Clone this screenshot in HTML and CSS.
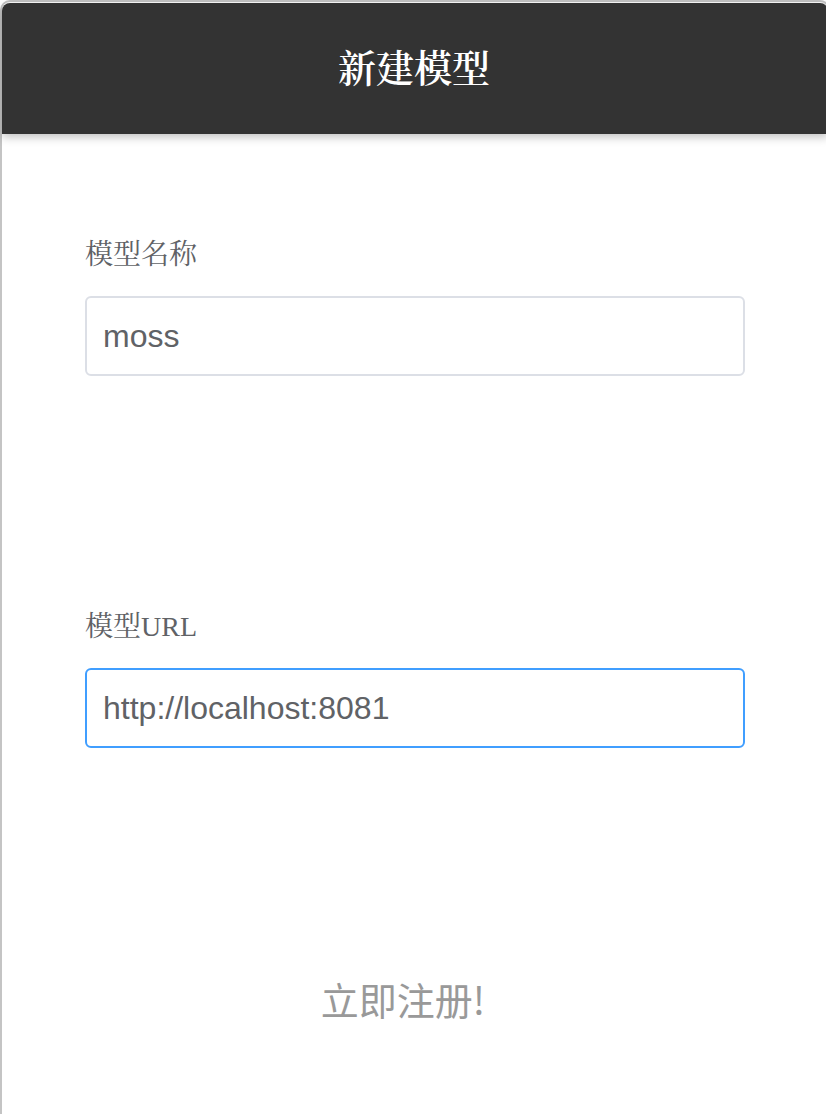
FILE: index.html
```html
<!DOCTYPE html>
<html lang="zh-CN">
<head>
<meta charset="utf-8">
<title>新建模型</title>
<link rel="stylesheet" href="styles.css">
</head>
<body>
<div class="frame">
  <header class="header">
    <h1 class="title">新建模型</h1>
  </header>
  <form class="form">
    <div class="item">
      <label class="label" for="name">模型名称</label>
      <input class="input" id="name" type="text" value="moss">
    </div>
    <div class="item">
      <label class="label" for="url">模型URL</label>
      <input class="input input-focus" id="url" type="text" value="http://localhost:8081">
    </div>
    <div class="actions">
      <button class="submit" type="button">立即注册!</button>
    </div>
  </form>
</div>
</body>
</html>
```

FILE: styles.css
```css
html, body {
  margin: 0;
  padding: 0;
  overflow: hidden;
  background: #ffffff;
}

.frame {
  box-sizing: border-box;
  width: 830px;
  min-height: 100vh;
  border: 2px solid #c4c4c4;
  border-bottom: none;
  border-radius: 10px 10px 0 0;
  background: #ffffff;
}

.header {
  height: 131px;
  margin-top: 1px;
  background: #333333;
  border-radius: 8px 8px 0 0;
  box-shadow: 0 3px 10px rgba(0, 0, 0, 0.25);
  display: flex;
  align-items: center;
  justify-content: center;
  padding-right: 2px;
}

.title {
  margin: 0;
  color: #ffffff;
  font-family: "Liberation Serif", "Noto Serif CJK SC", "Noto Sans CJK SC", serif;
  font-weight: 600;
  font-size: 38px;
  line-height: 1;
}

.form {
  padding: 103px 0 0 83px;
}

.item {
  display: flex;
  flex-direction: column;
  gap: 23px;
}

.item + .item {
  margin-top: 233px;
}

.label {
  color: #606266;
  font-family: "Liberation Serif", "Noto Serif CJK SC", "Noto Sans CJK SC", serif;
  font-size: 28px;
  line-height: 36px;
}

.input {
  box-sizing: border-box;
  width: 660px;
  height: 80px;
  border: 2px solid #dcdfe6;
  border-radius: 6px;
  padding: 0 16px;
  color: #606266;
  font-family: "Liberation Sans", Arial, sans-serif;
  font-size: 32px;
  outline: none;
  background: #ffffff;
}

.input-focus {
  border-color: #409eff;
}

.actions {
  box-sizing: border-box;
  width: 660px;
  display: flex;
  justify-content: center;
  padding-right: 24px;
  margin-top: 226px;
}

.submit {
  border: none;
  background: transparent;
  padding: 0;
  color: #999999;
  font-family: "Noto Sans CJK SC", sans-serif;
  font-size: 38px;
  line-height: 50px;
  cursor: pointer;
}
```
